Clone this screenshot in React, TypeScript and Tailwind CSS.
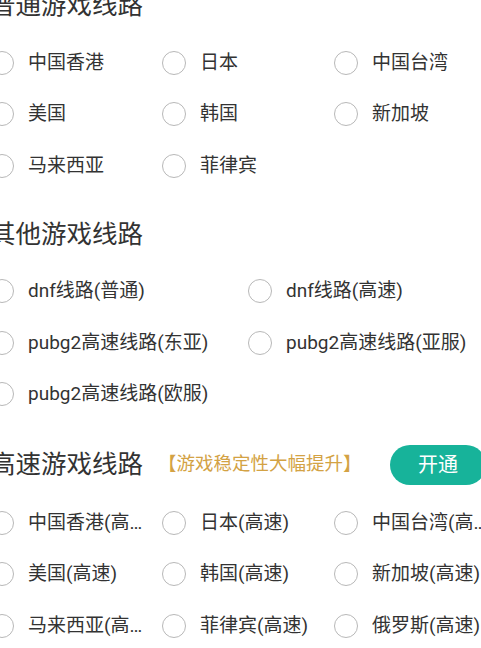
import React from "react";

const font = { fontFamily: "Roboto, 'Noto Sans CJK SC', 'Noto Sans', sans-serif" };

function Radio({ label, truncate }: { label: string; truncate?: boolean }) {
  return (
    <div className="flex items-center h-[51.5px]">
      <div className="w-[24px] h-[24px] rounded-full border-[1.5px] border-[#b8b8b8] shrink-0" />
      <span
        className={
          "ml-[14px] text-[19px] text-[#333333] whitespace-nowrap " +
          (truncate ? "overflow-hidden text-ellipsis max-w-[118px]" : "")
        }
      >
        {label}
      </span>
    </div>
  );
}

function Heading({ children }: { children: React.ReactNode }) {
  return <div className="text-[25.5px] text-[#333333] leading-none whitespace-nowrap">{children}</div>;
}

export default function App() {
  const s1 = ["中国香港", "日本", "中国台湾", "美国", "韩国", "新加坡", "马来西亚", "菲律宾"];
  const s2 = ["dnf线路(普通)", "dnf线路(高速)", "pubg2高速线路(东亚)", "pubg2高速线路(亚服)", "pubg2高速线路(欧服)"];
  const s3 = [
    "中国香港(高速)",
    "日本(高速)",
    "中国台湾(高速)",
    "美国(高速)",
    "韩国(高速)",
    "新加坡(高速)",
    "马来西亚(高速)",
    "菲律宾(高速)",
    "俄罗斯(高速)",
  ];
  return (
    <div className="w-[481px] h-[648px] overflow-hidden bg-white" style={font}>
      <div className="-ml-[10px] -mt-[14px] w-[516px]">
        <div className="h-[40px] flex items-center">
          <Heading>普通游戏线路</Heading>
        </div>
        <div className="grid grid-cols-3 mt-[11px]">
          {s1.map((l) => (
            <Radio key={l} label={l} />
          ))}
        </div>

        <div className="h-[40px] flex items-center mt-[23px]">
          <Heading>其他游戏线路</Heading>
        </div>
        <div className="grid grid-cols-2 mt-[11px]">
          {s2.map((l) => (
            <Radio key={l} label={l} />
          ))}
        </div>

        <div className="h-[40px] flex items-center mt-[25px] pr-[20px]">
          <Heading>高速游戏线路</Heading>
          <span className="ml-[15px] text-[18.5px] text-[#d3a244] whitespace-nowrap">【游戏稳定性大幅提升】</span>
          <button className="ml-auto w-[96px] h-[40px] rounded-full bg-[#17b39a] text-white text-[20px] flex items-center justify-center">
            开通
          </button>
        </div>
        <div className="grid grid-cols-3 mt-[12px]">
          {s3.map((l) => (
            <Radio key={l} label={l} truncate />
          ))}
        </div>
      </div>
    </div>
  );
}
